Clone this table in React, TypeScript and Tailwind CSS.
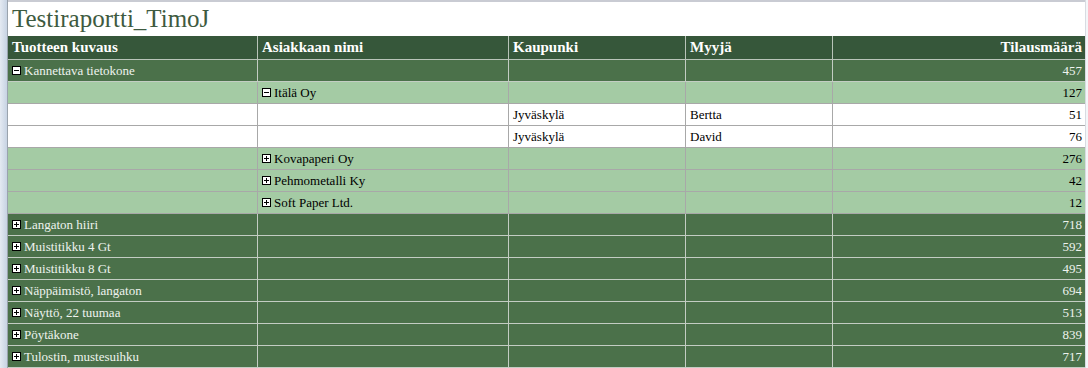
import React from "react"

type Row = {
  level: 1 | 2 | 3
  c1?: string
  c2?: string
  c3?: string
  c4?: string
  qty: string
  open?: boolean
}

const rows: Row[] = [
  { level: 1, c1: "Kannettava tietokone", qty: "457", open: true },
  { level: 2, c2: "Itälä Oy", qty: "127", open: true },
  { level: 3, c3: "Jyväskylä", c4: "Bertta", qty: "51" },
  { level: 3, c3: "Jyväskylä", c4: "David", qty: "76" },
  { level: 2, c2: "Kovapaperi Oy", qty: "276" },
  { level: 2, c2: "Pehmometalli Ky", qty: "42" },
  { level: 2, c2: "Soft Paper Ltd.", qty: "12" },
  { level: 1, c1: "Langaton hiiri", qty: "718" },
  { level: 1, c1: "Muistitikku 4 Gt", qty: "592" },
  { level: 1, c1: "Muistitikku 8 Gt", qty: "495" },
  { level: 1, c1: "Näppäimistö, langaton", qty: "694" },
  { level: 1, c1: "Näyttö, 22 tuumaa", qty: "513" },
  { level: 1, c1: "Pöytäkone", qty: "839" },
  { level: 1, c1: "Tulostin, mustesuihku", qty: "717" },
]

const grid = "grid grid-cols-[250px_251px_177px_147px_252px]"

function Toggle({ open }: { open?: boolean }) {
  return (
    <svg width="9" height="9" viewBox="0 0 9 9" className="mr-[3px] shrink-0">
      <rect x="0.5" y="0.5" width="8" height="8" fill="#fff" stroke="#000" />
      <rect x="2" y="4" width="5" height="1" fill="#000" />
      {!open && <rect x="4" y="2" width="1" height="5" fill="#000" />}
    </svg>
  )
}

function Cell({ children, right, cls }: { children?: React.ReactNode; right?: boolean; cls: string }) {
  return (
    <div className={`h-[22px] flex items-center px-[4px] border-r border-b whitespace-nowrap ${cls} ${right ? "justify-end" : ""}`}>
      {children}
    </div>
  )
}

export default function App() {
  return (
    <div className="w-[1088px] h-[368px] overflow-hidden bg-white flex font-['Liberation_Serif',serif]">
      <div className="w-[8px] shrink-0 bg-gradient-to-r from-[#e4eaf2] to-[#c7d3e3] border-r border-[#9aa3ad]" />
      <div className="w-[1077px] flex flex-col border-t-2 border-[#c9cbd3]">
        <div className="h-[34px] pl-[4px] pt-[1px] text-[25px] leading-[32px] text-[#3e5a40]">Testiraportti_TimoJ</div>
        <div className={`${grid} bg-[#36573a] text-white font-bold text-[15px]`}>
          {["Tuotteen kuvaus", "Asiakkaan nimi", "Kaupunki", "Myyjä"].map((h) => (
            <div key={h} className="h-[24px] flex items-center px-[4px] border-r border-b border-[#b9c4b9]">{h}</div>
          ))}
          <div className="h-[24px] flex items-center justify-end px-[3px] border-b border-[#b9c4b9]">Tilausmäärä</div>
        </div>
        {rows.map((r, i) => {
          const bg =
            r.level === 1 ? "bg-[#4b714a] text-[#eef3ee]" : r.level === 2 ? "bg-[#a4cba4] text-black" : "bg-white text-black"
          const bc = r.level === 1 ? "border-[#c3cdc3]" : "border-[#a8a8a8]"
          return (
            <div key={i} className={`${grid} ${bg} text-[13px]`}>
              <Cell cls={bc}>
                {r.c1 && (
                  <>
                    <Toggle open={r.open} />
                    {r.c1}
                  </>
                )}
              </Cell>
              <Cell cls={bc}>
                {r.c2 && (
                  <>
                    <Toggle open={r.open} />
                    {r.c2}
                  </>
                )}
              </Cell>
              <Cell cls={bc}>{r.c3}</Cell>
              <Cell cls={bc}>{r.c4}</Cell>
              <Cell cls={`${bc} border-r-0 pr-[3px]`} right>
                {r.qty}
              </Cell>
            </div>
          )
        })}
      </div>
      <div className="flex-1 border-l border-[#d8dce2] bg-[#f4f6f9]" />
    </div>
  )
}
